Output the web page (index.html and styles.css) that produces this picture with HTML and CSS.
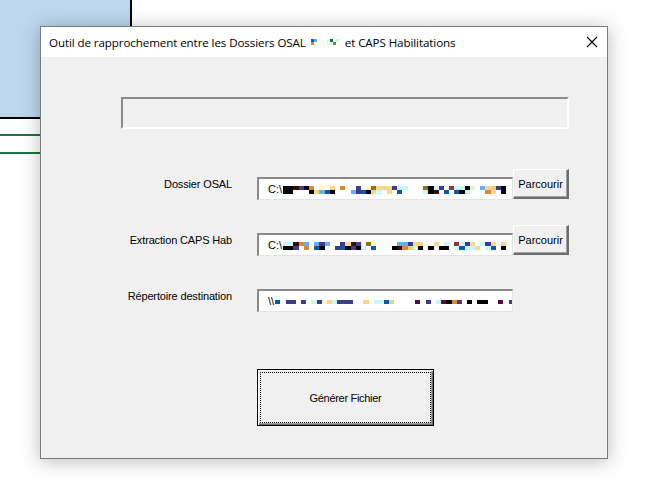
FILE: index.html
```html
<!DOCTYPE html>
<html lang="fr">
<head>
<meta charset="utf-8">
<title>Outil de rapprochement</title>
<link rel="stylesheet" href="styles.css">
</head>
<body>
<div class="sheet">
  <div class="cell-blue"></div>
  <div class="gline first"></div>
  <div class="gline"></div>
</div>

<div class="dialog">
  <div class="titlebar">
    <span class="title">Outil de rapprochement entre les Dossiers OSAL</span>
    <span class="ticon">
      <span class="tcol"><i class="d"></i><i class="o"></i></span>
      <span class="tcol"><i class="b"></i><i class="w"></i></span>
      <span class="tgap"></span>
      <span class="tcol"><i class="c"></i><i class="y"></i></span>
      <span class="tcol"><i class="g2"></i><i class="c"></i></span>
      <span class="tcol"><i class="w"></i><i class="o2"></i></span>
      <span class="tcol"><i class="c"></i><i class="w"></i></span>
    </span>
    <span class="title">et CAPS Habilitations</span>
    <svg class="close" width="12" height="12" viewBox="0 0 12 12"><path d="M1 1 L11 11 M11 1 L1 11" stroke="#000" stroke-width="1.1" fill="none"/></svg>
  </div>
  <div class="body">
    <div class="frame"></div>

    <div class="row">
      <div class="label">Dossier OSAL</div>
      <div class="field">
        <span class="path">C:\</span>
        <span class="mosaic">
          <span class="mrow">
            <i class="k"></i><i class="k"></i><i class="m"></i><i class="n"></i><i class="k"></i><i class="o"></i><i class="w"></i><i class="y"></i><i class="w"></i><i class="t"></i><i class="w"></i><i class="o"></i><i class="w"></i><i class="w"></i><i class="n"></i><i class="w"></i><i class="y"></i><i class="g"></i><i class="t"></i><i class="t"></i><i class="t"></i><i class="n"></i><i class="c"></i><i class="c"></i><i class="w"></i><i class="w"></i><i class="w"></i><i class="g"></i><i class="k"></i><i class="c"></i><i class="n"></i><i class="w"></i><i class="r"></i><i class="c"></i><i class="c"></i><i class="k"></i><i class="l"></i><i class="w"></i><i class="b"></i><i class="t"></i><i class="s"></i><i class="n"></i><i class="k"></i>
          </span>
          <span class="mrow">
            <i class="k"></i><i class="k"></i><i class="w"></i><i class="w"></i><i class="w"></i><i class="k"></i><i class="t"></i><i class="b"></i><i class="d"></i><i class="k"></i><i class="w"></i><i class="w"></i><i class="w"></i><i class="b"></i><i class="n"></i><i class="d"></i><i class="k"></i><i class="t"></i><i class="c"></i><i class="w"></i><i class="t"></i><i class="w"></i><i class="d"></i><i class="w"></i><i class="w"></i><i class="w"></i><i class="w"></i><i class="c"></i><i class="k"></i><i class="m"></i><i class="w"></i><i class="d"></i><i class="w"></i><i class="d"></i><i class="k"></i><i class="c"></i><i class="w"></i><i class="w"></i><i class="w"></i><i class="o"></i><i class="t"></i><i class="w"></i><i class="k"></i>
          </span>
        </span>
      </div>
      <button class="browse" type="button">Parcourir</button>
    </div>

    <div class="row">
      <div class="label">Extraction CAPS Hab</div>
      <div class="field">
        <span class="path">C:\</span>
        <span class="mosaic">
          <span class="mrow">
            <i class="c"></i><i class="c"></i><i class="m"></i><i class="o"></i><i class="b"></i><i class="w"></i><i class="b"></i><i class="n"></i><i class="b"></i><i class="w"></i><i class="w"></i><i class="n"></i><i class="t"></i><i class="m"></i><i class="n"></i><i class="w"></i><i class="g"></i><i class="y"></i><i class="w"></i><i class="w"></i><i class="w"></i><i class="w"></i><i class="b"></i><i class="b"></i><i class="n"></i><i class="t"></i><i class="t"></i><i class="w"></i><i class="w"></i><i class="t"></i><i class="w"></i><i class="c"></i><i class="w"></i><i class="r"></i><i class="c"></i><i class="n"></i><i class="t"></i><i class="w"></i><i class="c"></i><i class="n"></i><i class="t"></i><i class="w"></i><i class="t"></i>
          </span>
          <span class="mrow">
            <i class="k"></i><i class="k"></i><i class="n"></i><i class="w"></i><i class="o"></i><i class="w"></i><i class="d"></i><i class="k"></i><i class="w"></i><i class="w"></i><i class="n"></i><i class="d"></i><i class="k"></i><i class="n"></i><i class="k"></i><i class="c"></i><i class="w"></i><i class="d"></i><i class="w"></i><i class="w"></i><i class="w"></i><i class="k"></i><i class="m"></i><i class="o"></i><i class="s"></i><i class="c"></i><i class="k"></i><i class="w"></i><i class="k"></i><i class="w"></i><i class="k"></i><i class="k"></i><i class="w"></i><i class="c"></i><i class="d"></i><i class="c"></i><i class="c"></i><i class="t"></i><i class="w"></i><i class="c"></i><i class="d"></i><i class="w"></i><i class="k"></i>
          </span>
        </span>
      </div>
      <button class="browse" type="button">Parcourir</button>
    </div>

    <div class="row">
      <div class="label">Répertoire destination</div>
      <div class="field">
        <span class="path">\\</span>
        <span class="mosaic single">
          <span class="mrow">
            <i class="d"></i><i class="w"></i><i class="n"></i><i class="n"></i><i class="w"></i><i class="n"></i><i class="w"></i><i class="c"></i><i class="n"></i><i class="y"></i><i class="t"></i><i class="c"></i><i class="n"></i><i class="n"></i><i class="n"></i><i class="w"></i><i class="w"></i><i class="t"></i><i class="w"></i><i class="c"></i><i class="c"></i><i class="d"></i><i class="s"></i><i class="w"></i><i class="w"></i><i class="w"></i><i class="w"></i><i class="p"></i><i class="w"></i><i class="n"></i><i class="w"></i><i class="c"></i><i class="p"></i><i class="k"></i><i class="o"></i><i class="n"></i><i class="w"></i><i class="k"></i><i class="w"></i><i class="k"></i><i class="k"></i><i class="w"></i><i class="w"></i><i class="p"></i><i class="w"></i><i class="n"></i>
          </span>
        </span>
      </div>
    </div>

    <button class="generate" type="button"><span class="focus">Générer Fichier</span></button>
  </div>
</div>
</body>
</html>
```

FILE: styles.css
```css
* { box-sizing: border-box; }

html, body {
  margin: 0;
  padding: 0;
}

body {
  width: 663px;
  height: 502px;
  background: #ffffff;
  position: relative;
  overflow: hidden;
  font-family: "Liberation Sans", Arial, sans-serif;
  font-size: 11px;
  color: #000;
}

/* background spreadsheet */
.sheet {
  display: flex;
  flex-direction: column;
}

.cell-blue {
  width: 132px;
  height: 119px;
  background: #bdd7ee;
  border-right: 2px solid #000;
  border-bottom: 2px solid #000;
}

.gline {
  width: 300px;
  height: 2px;
  background: #217346;
  margin-top: 16px;
}

.gline.first {
  margin-top: 15px;
}

/* dialog window */
.dialog {
  position: absolute;
  left: 40px;
  top: 26px;
  width: 568px;
  height: 433px;
  border: 1px solid #7a7a7a;
  background: #f0f0f0;
  box-shadow: 0 2px 18px rgba(0, 0, 0, 0.28);
  display: flex;
  flex-direction: column;
}

.titlebar {
  height: 30px;
  background: #ffffff;
  display: flex;
  align-items: center;
  padding-left: 8px;
  font-family: "Open Sans", "Noto Sans", sans-serif;
  font-size: 11.6px;
  letter-spacing: -0.1px;
  color: #000;
  position: relative;
}

.ticon {
  display: inline-flex;
  align-items: center;
  margin: 0 6px 0 5px;
}

.tcol {
  display: flex;
  flex-direction: column;
}

.tcol i {
  display: block;
  width: 3px;
  height: 3px;
}

.tgap {
  width: 10px;
}

.close {
  position: absolute;
  right: 9px;
  top: 9px;
}

.body {
  flex: 1;
  display: flex;
  flex-direction: column;
  padding-top: 40px;
}

.frame {
  margin-left: 80px;
  width: 448px;
  height: 32px;
  border-top: 2px solid #8a8a8a;
  border-left: 2px solid #8a8a8a;
  border-bottom: 2px solid #ffffff;
  border-right: 2px solid #ffffff;
  background: #f0f0f0;
}

.row {
  display: flex;
  align-items: flex-start;
  height: 56px;
}

.frame + .row {
  margin-top: 40px;
}

.label {
  width: 191px;
  text-align: right;
  padding-top: 9px;
  line-height: 13px;
  white-space: nowrap;
  letter-spacing: -0.15px;
}

.field {
  margin-left: 25px;
  margin-top: 8px;
  width: 256px;
  height: 23px;
  background: #ffffff;
  border-top: 2px solid #8a8a8a;
  border-left: 2px solid #8a8a8a;
  border-bottom: 1px solid #e3e3e3;
  border-right: 1px solid #e3e3e3;
  display: flex;
  align-items: center;
  padding-left: 9px;
  overflow: hidden;
  white-space: nowrap;
}

.path {
  font-size: 11px;
  line-height: 13px;
}

.mosaic {
  display: flex;
  flex-direction: column;
  margin-left: 1px;
  margin-top: 2px;
}

.mosaic.single {
  margin-top: 1px;
}

.mrow {
  display: flex;
}

.mrow i {
  display: block;
  width: 5.2px;
  height: 4px;
  flex-shrink: 0;
}

.k { background: #000000; }
.m { background: #3a0808; }
.n { background: #3d3d90; }
.o { background: #d98a2e; }
.o2 { background: #c46a10; }
.y { background: #fff8c0; }
.t { background: #fcd68a; }
.c { background: #c8f8fa; }
.b { background: #6aaef0; }
.d { background: #0a5aa8; }
.g { background: #8a7410; }
.g2 { background: #1a6a6a; }
.r { background: #8a3a3a; }
.p { background: #5a0a3a; }
.l { background: #d8f8d8; }
.s { background: #d8d48a; }
.w { background: transparent; }

.browse {
  width: 56px;
  height: 30px;
  margin: 0;
  padding: 0;
  background: #f0f0f0;
  font-family: "Liberation Sans", Arial, sans-serif;
  font-size: 11px;
  color: #000;
  border-top: 1px solid #ffffff;
  border-left: 1px solid #ffffff;
  border-right: 2px solid #6e6e6e;
  border-bottom: 2px solid #6e6e6e;
  box-shadow: inset -1px -1px 0 #a0a0a0;
}

.generate {
  margin: 32px 0 0 216px;
  width: 177px;
  height: 57px;
  padding: 2px;
  background: #f0f0f0;
  border: 1px solid #000;
  box-shadow: inset 1px 1px 0 #ffffff, inset -1px -1px 0 #6e6e6e, inset -2px -2px 0 #a0a0a0;
  font-family: "Liberation Sans", Arial, sans-serif;
  font-size: 11px;
  letter-spacing: -0.3px;
  color: #000;
  display: flex;
}

.focus {
  flex: 1;
  border: 1px dotted #000;
  display: flex;
  align-items: center;
  justify-content: center;
}
```
